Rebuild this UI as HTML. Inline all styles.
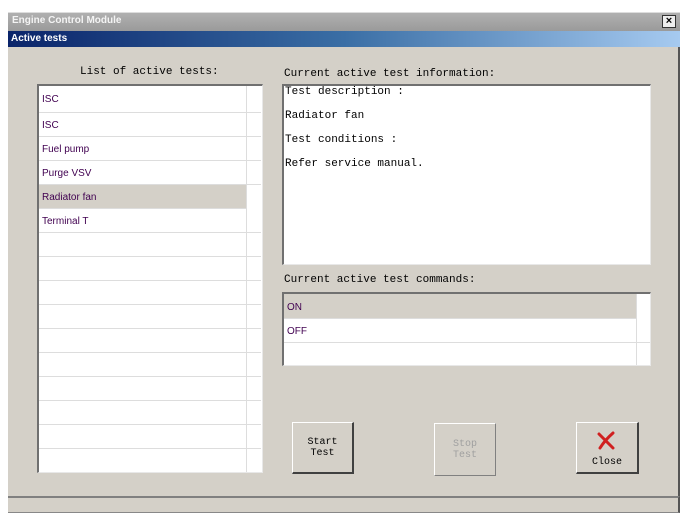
<!DOCTYPE html>
<html><head><style>
*{margin:0;padding:0;box-sizing:border-box}
body{width:688px;height:520px;background:#fff;position:relative;overflow:hidden;font-family:"Liberation Sans",sans-serif}
.a{position:absolute}
.mono{font-family:"Liberation Mono",monospace;font-size:11px;color:#000}
.sunk{background:#fff;border-top:2px solid #707070;border-left:2px solid #707070;border-right:1px solid #e8e8e8;border-bottom:1px solid #e8e8e8}
.row{position:absolute;left:0;height:24px;border-bottom:1px solid #ddd;font-size:10px;color:#400050;padding-left:3px;line-height:25px}
.btn{position:absolute;background:#d4d0c8;border-top:1px solid #fff;border-left:1px solid #fff;border-right:2px solid #404040;border-bottom:2px solid #404040;font-family:"Liberation Mono",monospace;font-size:10px;text-align:center;line-height:11px}
.tl{height:24px;line-height:12px}
</style></head><body>
<div class="a" style="left:8px;top:12px;width:672px;height:19px;background:linear-gradient(#b0b0b0,#9a9a9a);border-top:1px solid #ddd"></div>
<div class="a" style="left:12px;top:15px;font-size:10px;font-weight:bold;color:#f4f4f4">Engine Control Module</div>
<div class="a" style="left:662px;top:15px;width:14px;height:13px;background:#eee;border:1px solid #333;font-size:11px;line-height:11px;text-align:center;font-weight:bold">×</div>
<div class="a" style="left:8px;top:31px;width:672px;height:16px;background:linear-gradient(90deg,#0a246a,#3a6ea5 50%,#a6caf0)"></div>
<div class="a" style="left:11px;top:33px;font-size:10px;font-weight:bold;color:#fff">Active tests</div>
<div class="a" style="left:8px;top:47px;width:672px;height:449px;background:#d4d0c8;border-right:2px solid #555"></div>
<div class="a" style="left:8px;top:496px;width:672px;height:17px;background:#d4d0c8;border-top:2px solid #808080;border-right:2px solid #555;border-bottom:1px solid #888"></div>

<div class="a mono" style="left:80px;top:66px">List of active tests:</div>
<div class="a sunk" style="left:37px;top:84px;width:226px;height:389px;overflow:hidden">
<div class="a" style="left:207px;top:0;width:1px;height:400px;background:#ddd"></div>
<div class="row" style="top:0;width:222px;height:27px;line-height:27px">ISC</div>
<div class="row" style="top:27px;width:222px">ISC</div>
<div class="row" style="top:51px;width:222px">Fuel pump</div>
<div class="row" style="top:75px;width:222px">Purge VSV</div>
<div class="row" style="top:99px;width:207px;background:#d4d0c8">Radiator fan</div>
<div class="row" style="top:123px;width:222px">Terminal T</div>
<div class="row" style="top:147px;width:222px"></div>
<div class="row" style="top:171px;width:222px"></div>
<div class="row" style="top:195px;width:222px"></div>
<div class="row" style="top:219px;width:222px"></div>
<div class="row" style="top:243px;width:222px"></div>
<div class="row" style="top:267px;width:222px"></div>
<div class="row" style="top:291px;width:222px"></div>
<div class="row" style="top:315px;width:222px"></div>
<div class="row" style="top:339px;width:222px"></div>
<div class="row" style="top:363px;width:222px"></div>
</div>

<div class="a mono" style="left:284px;top:68px">Current active test information:</div>
<div class="a sunk mono" style="left:282px;top:84px;width:369px;height:181px;padding:0 1px">
<div class="tl">Test description :</div><div class="tl">Radiator fan</div><div class="tl">Test conditions :</div><div class="tl">Refer service manual.</div></div>

<div class="a mono" style="left:284px;top:274px">Current active test commands:</div>
<div class="a sunk" style="left:282px;top:292px;width:369px;height:74px;overflow:hidden">
<div class="a" style="left:352px;top:0;width:1px;height:80px;background:#ddd"></div>
<div class="row" style="top:0;width:352px;background:#d4d0c8;height:25px;line-height:27px">ON</div>
<div class="row" style="top:25px;width:366px;line-height:26px">OFF</div>
</div>

<div class="btn" style="left:292px;top:422px;width:62px;height:52px;padding-top:14px">Start<br>Test</div>
<div class="btn" style="left:434px;top:423px;width:62px;height:53px;padding-top:15px;color:#a0a0a0;border-right:1px solid #808080;border-bottom:1px solid #808080">Stop<br>Test</div>
<div class="btn" style="left:576px;top:422px;width:63px;height:52px;padding-top:34px">Close</div>
<svg class="a" style="left:596px;top:431px" width="22" height="20"><path d="M3 3 Q10 10 17 17 M17 2 Q9 9 4 17" stroke="#d02020" stroke-width="3" fill="none" stroke-linecap="round"/></svg>
</body></html>
